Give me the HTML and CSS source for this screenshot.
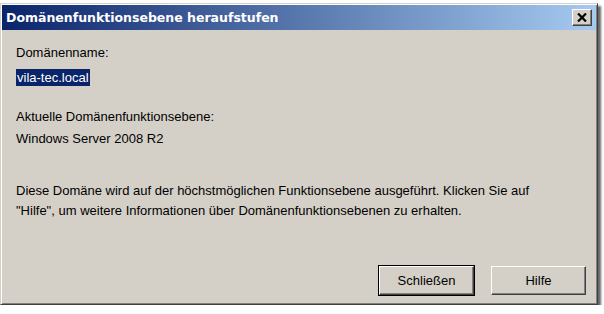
FILE: index.html
```html
<!DOCTYPE html>
<html lang="de">
<head>
  <meta charset="UTF-8" />
  <meta name="viewport" content="width=device-width, initial-scale=1.0"/>
  <title>Domänenfunktionsebene heraufstufen</title>
  <link rel="stylesheet" href="styles.css">
</head>
<body>

  <div class="window">
    <div class="titlebar">
      <span class="title">Domänenfunktionsebene heraufstufen</span>
      <button class="close" title="Schließen">
        <svg width="10" height="9" viewBox="0 0 10 9">
          <path d="M1 0.5l8 8M9 0.5l-8 8" stroke="#000" stroke-width="2.2" fill="none"/>
        </svg>
      </button>
    </div>

    <div class="content">
      <div class="label first">Domänenname:</div>
      <div class="value name"><span class="selected">vila-tec.local</span></div>

      <div class="label">Aktuelle Domänenfunktionsebene:</div>
      <div class="value">Windows Server 2008 R2</div>

      <p class="info">Diese Domäne wird auf der höchstmöglichen Funktionsebene ausgeführt. Klicken Sie auf<br>"Hilfe", um weitere Informationen über Domänenfunktionsebenen zu erhalten.</p>

      <div class="buttons">
        <button class="btn default">Schließen</button>
        <button class="btn">Hilfe</button>
      </div>
    </div>
  </div>

</body>
</html>
```

FILE: styles.css
```css
body {
  margin: 0;
  background-color: #ffffff;
  font-family: "Liberation Sans", Arial, sans-serif;
  font-size: 13px;
  color: #000;
}

.window {
  margin-top: 3px;
  width: 598px;
  height: 302px;
  box-sizing: border-box;
  background-color: #d4d0c8;
  border-top: 1px solid #d4d0c8;
  border-left: 1px solid #d4d0c8;
  border-right: 1px solid #404040;
  border-bottom: 1px solid #404040;
  box-shadow: inset 1px 1px 0 #fff, inset -1px -1px 0 #808080, 3px 3px 2px rgba(0,0,0,0.6);
  display: flex;
  flex-direction: column;
}

.titlebar {
  height: 25px;
  margin: 1px 1px 0 1px;
  background: linear-gradient(to right, #0a246a, #a6caf0);
  display: flex;
  align-items: center;
  justify-content: space-between;
  padding: 0 4px 0 4px;
}

.title {
  color: #fff;
  font-family: "DejaVu Sans", Tahoma, sans-serif;
  font-weight: bold;
  font-size: 12.5px;
}

.close {
  width: 20px;
  height: 17px;
  padding: 0;
  background-color: #d4d0c8;
  border: 1px solid;
  border-color: #fff #404040 #404040 #fff;
  box-shadow: inset -1px -1px 0 #808080;
  display: flex;
  align-items: center;
  justify-content: center;
}

.content {
  flex: 1;
  padding: 15px 11px 0 15px;
  display: flex;
  flex-direction: column;
  line-height: 16px;
}

.label {
  margin-top: 23px;
}

.label.first {
  margin-top: 0;
}

.value {
  margin-top: 6px;
}

.value.name {
  margin-top: 9px;
}

.selected {
  background-color: #0a246a;
  color: #fff;
  padding: 1px 1px;
}

.info {
  margin: 34px 0 0 0;
  line-height: 20px;
}

.buttons {
  margin-top: auto;
  margin-bottom: 9px;
  display: flex;
  justify-content: flex-end;
  gap: 17px;
}

.btn {
  width: 95px;
  height: 29px;
  font-family: "Liberation Sans", Arial, sans-serif;
  font-size: 13px;
  background-color: #d4d0c8;
  border: 1px solid;
  border-color: #fff #404040 #404040 #fff;
  box-shadow: inset -1px -1px 0 #808080;
  padding: 0;
}

.btn.default {
  outline: 1px solid #000;
  outline-offset: 0;
}
```
